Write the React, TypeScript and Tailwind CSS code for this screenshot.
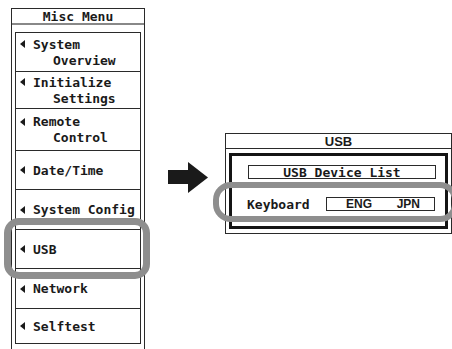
import React from "react";

type MenuItem = { lines: string[]; h: string };

const items: MenuItem[] = [
  { lines: ["System", "Overview"], h: "h-[39px]" },
  { lines: ["Initialize", "Settings"], h: "h-[37px]" },
  { lines: ["Remote", "Control"], h: "h-[42px]" },
  { lines: ["Date/Time"], h: "h-[39px]" },
  { lines: ["System Config"], h: "h-[40px]" },
  { lines: ["USB"], h: "h-[39px]" },
  { lines: ["Network"], h: "h-[40px]" },
  { lines: ["Selftest"], h: "h-[36px] border-b" },
];

function Tri() {
  return (
    <svg width="5" height="8" viewBox="0 0 5 8" className="shrink-0">
      <polygon points="5,0 0,4 5,8" fill="#1a1a1a" />
    </svg>
  );
}

function MenuButton({ item }: { item: MenuItem }) {
  return (
    <div className={`flex flex-col justify-center border-t border-[#2a2a2a] pl-[4px] ${item.h}`}>
      <div className="flex h-[16px] items-center gap-[8px]">
        <Tri />
        <span>{item.lines[0]}</span>
      </div>
      {item.lines[1] && <div className="flex h-[16px] items-center pl-[33px]">{item.lines[1]}</div>}
    </div>
  );
}

export default function App() {
  return (
    <div className="relative flex h-[349px] w-[452px] items-start overflow-hidden bg-white pl-[11px] pt-[8px] font-['DejaVu_Sans_Mono','Liberation_Mono',monospace] text-[13px] font-bold leading-none text-[#1a1a1a]">
      {/* left menu */}
      <div className="relative flex h-[341px] w-[134px] shrink-0 flex-col border-x border-t border-[#2a2a2a]">
        <div className="flex h-[16px] items-center justify-center border-b-2 border-[#888]">Misc Menu</div>
        <div className="mx-[3px] mt-[7px] border-x border-[#2a2a2a]">
          {items.map((it) => (
            <MenuButton key={it.lines.join(" ")} item={it} />
          ))}
        </div>
        <div className="pointer-events-none absolute left-[-8px] top-[209px] h-[61px] w-[146px] rounded-[15px] border-[7px] border-[#8e8e8e]" />
      </div>

      {/* arrow */}
      <svg width="40" height="31" viewBox="0 0 40 31" className="ml-[23px] mt-[154px] shrink-0">
        <rect x="0" y="8" width="21" height="14" fill="#1a1a1a" />
        <polygon points="20,0 40,15.5 20,31" fill="#1a1a1a" />
      </svg>

      {/* USB panel */}
      <div className="relative ml-[17px] mt-[125px] flex h-[101px] w-[227px] shrink-0 flex-col border border-[#2a2a2a]">
        <div className="flex h-[15px] items-center justify-center border-b border-[#2a2a2a] font-['Liberation_Sans_Narrow','Liberation_Sans',sans-serif] text-[13px]">
          USB
        </div>
        <div className="mx-[3px] mt-[4px] flex h-[76px] flex-col border-[3px] border-[#141414] pl-[16px]">
          <div className="mt-[9px] flex h-[14px] w-[188px] items-center justify-center border border-[#2a2a2a]">
            USB Device List
          </div>
          <div className="mt-[18px] flex items-center">
            <span className="w-[79px] -ml-[1px]">Keyboard</span>
            <div className="flex h-[14px] w-[109px] items-center justify-between border border-[#2a2a2a] pl-[19px] pr-[14px] font-['Liberation_Sans_Narrow','Liberation_Sans',sans-serif] text-[12px]">
              <span>ENG</span>
              <span>JPN</span>
            </div>
          </div>
        </div>
        <div className="pointer-events-none absolute left-[-13px] top-[48px] h-[40px] w-[245px] rounded-[18px] border-[6px] border-[#8e8e8e]" />
      </div>
    </div>
  );
}
